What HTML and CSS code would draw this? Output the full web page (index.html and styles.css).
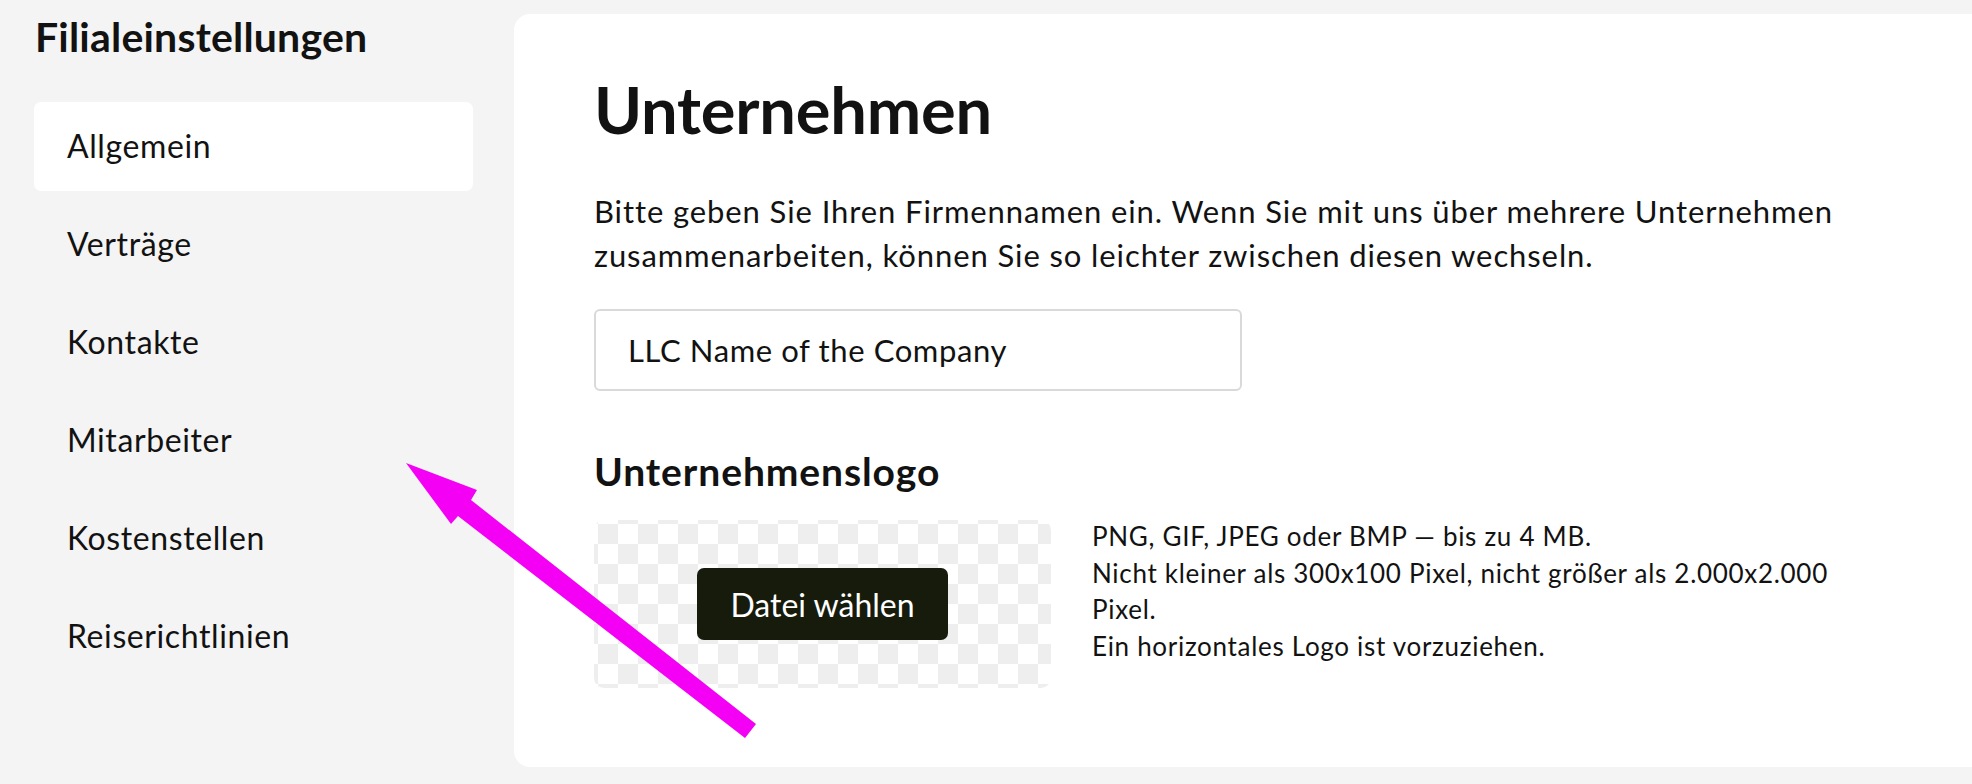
FILE: index.html
```html
<!DOCTYPE html>
<html lang="de">
<head>
<meta charset="utf-8">
<title>Filialeinstellungen</title>
<link rel="stylesheet" href="styles.css">
</head>
<body>
<div class="page">
  <aside class="sidebar">
    <h2 class="sidebar-title">Filialeinstellungen</h2>
    <nav class="nav">
      <a class="nav-item is-active">Allgemein</a>
      <a class="nav-item">Verträge</a>
      <a class="nav-item">Kontakte</a>
      <a class="nav-item">Mitarbeiter</a>
      <a class="nav-item">Kostenstellen</a>
      <a class="nav-item">Reiserichtlinien</a>
    </nav>
  </aside>
  <main class="card">
    <h1 class="card-title">Unternehmen</h1>
    <p class="lead">Bitte geben Sie Ihren Firmennamen ein. Wenn Sie mit uns über mehrere Unternehmen zusammenarbeiten, können Sie so leichter zwischen diesen wechseln.</p>
    <div class="field">LLC Name of the Company</div>
    <h2 class="section-title">Unternehmenslogo</h2>
    <div class="logo-row">
      <div class="logo-drop">
        <button class="btn" type="button">Datei wählen</button>
      </div>
      <div class="logo-info">
        <span class="info-line">PNG, GIF, JPEG oder BMP — bis zu 4 MB.</span>
        <span class="info-line">Nicht kleiner als 300x100 Pixel, nicht größer als 2.000x2.000 Pixel.</span>
        <span class="info-line">Ein horizontales Logo ist vorzuziehen.</span>
      </div>
    </div>
  </main>
  <svg class="annotation" width="1972" height="784" viewBox="0 0 1972 784" aria-hidden="true">
    <polygon points="406,463 477,490 471,500 756,724 745,738 458,516 451,524" fill="#f400f4"/>
  </svg>
</div>
</body>
</html>
```

FILE: styles.css
```css
html, body {
  margin: 0;
  padding: 0;
}
body {
  background: #f4f4f4;
  font-family: Lato, "Open Sans", sans-serif;
  color: #121212;
  width: 1972px;
  height: 784px;
  overflow: hidden;
}
.page {
  position: relative;
  display: flex;
  align-items: flex-start;
  height: 784px;
}
.sidebar {
  width: 439px;
  padding-left: 34px;
  flex: none;
}
.sidebar-title {
  margin: 12px 0 41px 1px;
  font-size: 41px;
  line-height: 1.2;
  font-weight: 700;
  letter-spacing: 0.2px;
}
.nav {
  display: flex;
  flex-direction: column;
  gap: 9px;
}
.nav-item {
  display: flex;
  align-items: center;
  height: 89px;
  padding-left: 33px;
  border-radius: 7px;
  font-size: 32px;
  line-height: 1.2;
  letter-spacing: 0.6px;
  color: #121212;
}
.nav-item.is-active {
  background: #ffffff;
}
.card {
  flex: 1;
  margin: 14px 0 0 41px;
  background: #ffffff;
  border-radius: 16px 0 0 16px;
  padding: 56px 80px 79px 80px;
}
.card-title {
  margin: 0;
  font-size: 65px;
  line-height: 78px;
  font-weight: 700;
  letter-spacing: -0.2px;
}
.lead {
  margin: 41px 0 0 0;
  max-width: 1300px;
  font-size: 31px;
  line-height: 44px;
  letter-spacing: 0.9px;
}
.field {
  margin-top: 32px;
  width: 648px;
  height: 82px;
  box-sizing: border-box;
  border: 2px solid #d9d9d9;
  border-radius: 6px;
  padding-left: 32px;
  display: flex;
  align-items: center;
  font-size: 31px;
  letter-spacing: 0.6px;
}
.section-title {
  margin: 57px 0 0 0;
  font-size: 39px;
  line-height: 46px;
  font-weight: 700;
  letter-spacing: 0.9px;
}
.logo-row {
  display: flex;
  align-items: flex-start;
  gap: 41px;
  margin-top: 26px;
}
.logo-drop {
  width: 457px;
  height: 168px;
  flex: none;
  border-radius: 10px;
  background: repeating-conic-gradient(#ffffff 0 25%, #eeeeee 0 50%) 4px 4px / 40px 40px;
  display: flex;
  align-items: center;
  justify-content: center;
}
.btn {
  width: 251px;
  height: 72px;
  border: none;
  border-radius: 7px;
  background: #161b0c;
  color: #ffffff;
  font-family: inherit;
  font-size: 32px;
}
.logo-info {
  flex: 1;
  margin-top: -2px;
  font-size: 26px;
  line-height: 36.7px;
  letter-spacing: 0.7px;
}
.info-line {
  display: block;
}
.annotation {
  position: absolute;
  top: 0;
  left: 0;
  pointer-events: none;
}
```
